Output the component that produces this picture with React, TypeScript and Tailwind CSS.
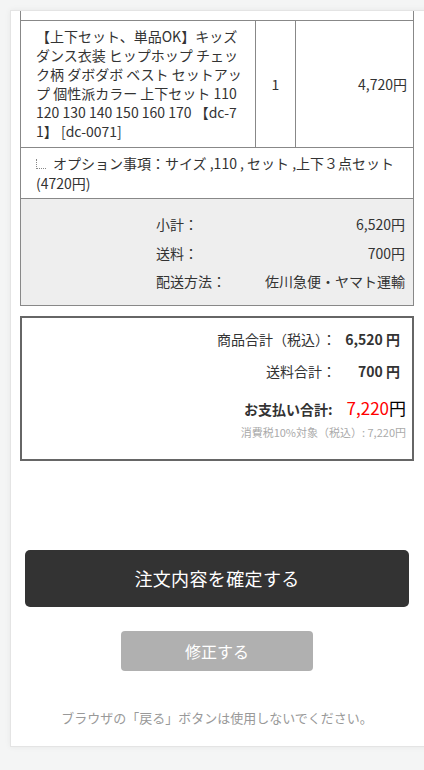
export default function App() {
    const jp = { fontFamily: '"Noto Sans CJK JP", "Noto Sans", sans-serif' }
    const itemLines = [
        '【上下セット、単品OK】キッズ',
        'ダンス衣装 ヒップホップ チェッ',
        'ク柄 ダボダボ ベスト セットアッ',
        'プ 個性派カラー 上下セット 110',
        '120 130 140 150 160 170 【dc-7',
        '1】 [dc-0071]',
    ]
    return (
        <div className="min-h-[770px] bg-[#f4f5f5] pl-[10px] pt-[10px] overflow-hidden text-[#333]" style={jp}>
            <div className="w-[440px] h-[737px] bg-white border border-[#e4e4e4] shadow-[0_0_6px_rgba(0,0,0,0.06)] pl-[9px]">
                {/* order table */}
                <div className="w-[394px] border-l border-r border-b border-[#888] text-[14px]">
                    <div className="h-[9px]" />
                    <div className="flex border-t border-[#888]">
                        <div className="w-[235px] border-r border-[#888] pl-[15px] pr-[8px] pt-[6px] pb-[6px] leading-[19px] whitespace-nowrap">
                            {itemLines.map((l) => (
                                <div key={l}>{l}</div>
                            ))}
                        </div>
                        <div className="w-[40px] border-r border-[#888] flex items-center justify-center">1</div>
                        <div className="flex-1 flex items-center justify-end pr-[6px]">4,720円</div>
                    </div>
                    <div className="border-t border-[#888] pl-[15px] pr-[10px] pt-[5px] pb-[5px] leading-[20px]">
                        <span className="inline-block w-[10px] h-[10px] border-l border-b border-dotted border-[#888] mr-[7px]" />
                        オプション事項：サイズ ,110 , セット ,上下３点セット
                        <br />
                        (4720円)
                    </div>
                    <div className="border-t border-[#888] bg-[#eeeeee] pl-[135px] pr-[8px] pt-[15px] pb-[14px] leading-[20px]">
                        <div className="flex flex-col gap-[8.5px]">
                            <div className="flex justify-between">
                                <span>小計：</span>
                                <span>6,520円</span>
                            </div>
                            <div className="flex justify-between">
                                <span>送料：</span>
                                <span>700円</span>
                            </div>
                            <div className="flex justify-between">
                                <span>配送方法：</span>
                                <span>佐川急便・ヤマト運輸</span>
                            </div>
                        </div>
                    </div>
                </div>

                {/* totals */}
                <div className="w-[394px] mt-[10px] border-2 border-[#666] pt-[11px] pb-[19px]">
                    <div className="grid grid-cols-[1fr_64px] text-[14px] leading-[20px] gap-y-[12px] pr-[12px]">
                        <div className="text-right">商品合計（税込）：</div>
                        <div className="text-right font-bold">6,520 円</div>
                        <div className="text-right">送料合計：</div>
                        <div className="text-right font-bold">700 円</div>
                    </div>
                    <div className="flex justify-end items-baseline gap-[14px] pr-[6px] mt-[14px] leading-[26px]">
                        <span className="font-bold text-[14px]">お支払い合計:</span>
                        <span className="text-[17px]">
                            <span className="text-[#ff0000]">7,220</span>
                            <span className="text-black">円</span>
                        </span>
                    </div>
                    <div className="text-right pr-[6px] text-[11px] leading-[16px] text-[#aaa] mt-[2px]">
                        消費税10%対象（税込）: 7,220円
                    </div>
                </div>

                {/* actions */}
                <div className="w-[394px] flex flex-col items-center">
                    <button className="mt-[89px] w-[384px] h-[57px] rounded-[5px] bg-[#333] text-white text-[18px] tracking-[0.02em]">
                        注文内容を確定する
                    </button>
                    <button className="mt-[24px] w-[192px] h-[40px] rounded-[4px] bg-[#b0b0b0] text-white text-[16px]">
                        修正する
                    </button>
                    <p className="mt-[37px] text-[13px] leading-[20px] text-[#999]">
                        ブラウザの「戻る」ボタンは使用しないでください。
                    </p>
                </div>
            </div>
        </div>
    )
}
